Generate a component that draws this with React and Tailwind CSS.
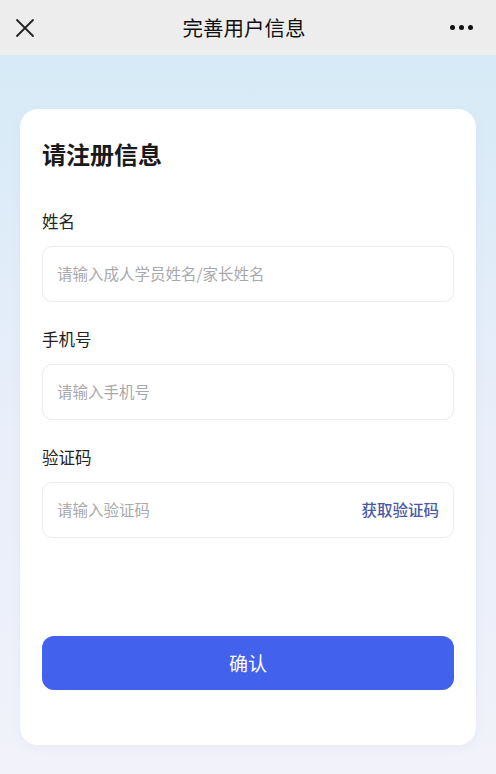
import React from 'react';

const font = { fontFamily: '"Noto Sans CJK SC", "Noto Sans", sans-serif' };

const Field = ({ label, placeholder, action }) => (
  <div>
    <div className="text-[16.5px] leading-[22px] text-[#222] mb-[14px]">{label}</div>
    <div className="h-[56px] rounded-[10px] border border-[#ececef] bg-white flex items-center justify-between pl-[14px] pr-[14px]">
      <span className="text-[15.5px] text-[#a9a9ad]">{placeholder}</span>
      {action && <span className="text-[15.5px] font-medium text-[#4a5aa8]">{action}</span>}
    </div>
  </div>
);

const App = () => {
  return (
    <div className="w-[496px] h-[774px] overflow-hidden flex flex-col" style={font}>
      {/* Nav bar */}
      <div className="h-[55px] bg-[#ededed] flex items-center px-[15px] shrink-0">
        <div className="flex-1 flex items-center">
          <svg width="20" height="20" viewBox="0 0 20 20" fill="none" stroke="#222" strokeWidth="1.8" strokeLinecap="round">
            <path d="M2 2l16 16M18 2L2 18" />
          </svg>
        </div>
        <div className="text-[20.5px] text-[#111]">完善用户信息</div>
        <div className="flex-1 flex items-center justify-end gap-[4px] pr-[8px]">
          <span className="w-[5px] h-[5px] rounded-full bg-[#111]" />
          <span className="w-[5px] h-[5px] rounded-full bg-[#111]" />
          <span className="w-[5px] h-[5px] rounded-full bg-[#111]" />
        </div>
      </div>

      {/* Body */}
      <div className="flex-1 bg-gradient-to-b from-[#d6ebf7] via-[#e8eefa] to-[#f1f2fa] px-[20px] pt-[54px]">
        <div className="bg-white rounded-[18px] h-[636px] px-[22px] pt-[29px] shadow-[0_2px_10px_rgba(180,190,220,0.15)]">
          <h1 className="text-[24px] leading-[32px] font-bold text-[#1a1a1a] mb-[40px]">请注册信息</h1>
          <div className="flex flex-col gap-[26px]">
            <Field label="姓名" placeholder="请输入成人学员姓名/家长姓名" />
            <Field label="手机号" placeholder="请输入手机号" />
            <Field label="验证码" placeholder="请输入验证码" action="获取验证码" />
          </div>
          <button className="mt-[98px] w-full h-[54px] rounded-[12px] bg-[#4261ec] text-white text-[19px]">确认</button>
        </div>
      </div>
    </div>
  );
};

export default App;
